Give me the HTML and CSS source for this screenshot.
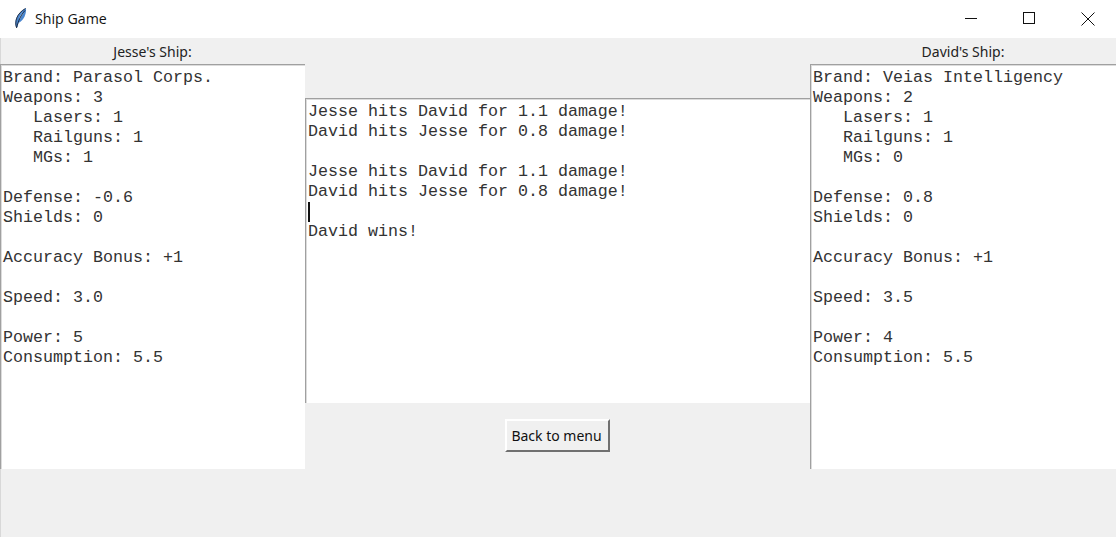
FILE: index.html
```html
<!DOCTYPE html>
<html lang="en">
<head>
    <meta charset="UTF-8">
    <title>Ship Game</title>
    <link rel="stylesheet" href="styles.css">
</head>
<body>
    <div id="titlebar">
        <svg class="app-icon" width="16" height="24" viewBox="0 0 16 24">
            <path d="M5 20 C3 15 5 6 15 1 C15.5 7 13 13 7.5 16 L6.5 20 Z" fill="#4a86cf"/>
            <path d="M12 6 C10 8 9 10 8.5 12" fill="none" stroke="#a9cdf0" stroke-width="1.4"/>
            <path d="M5.5 20.5 C3.5 15 5.5 6.5 14.5 1.5" fill="none" stroke="#2b3546" stroke-width="1"/>
            <path d="M14 3.5 C10 8 7.5 13 5.5 21" fill="none" stroke="#1c2c44" stroke-width="1"/>
        </svg>
        <span class="app-title">Ship Game</span>
        <div class="win-controls">
            <svg class="win-btn" width="12" height="12" viewBox="0 0 12 12"><path d="M0 6.5H12" stroke="#111" fill="none"/></svg>
            <svg class="win-btn" width="12" height="12" viewBox="0 0 12 12"><rect x="0.5" y="0.5" width="11" height="11" stroke="#111" fill="none"/></svg>
            <svg class="win-btn" width="14" height="14" viewBox="0 0 14 14"><path d="M1.5 0.5L14.5 13.5M14.5 0.5L1.5 13.5" stroke="#111" fill="none"/></svg>
        </div>
    </div>

    <div id="game">
        <div class="ship-col">
            <div class="ship-label">Jesse's Ship:</div>
            <pre class="text-box ship-stats">Brand: Parasol Corps.
Weapons: 3
   Lasers: 1
   Railguns: 1
   MGs: 1

Defense: -0.6
Shields: 0

Accuracy Bonus: +1

Speed: 3.0

Power: 5
Consumption: 5.5</pre>
        </div>

        <div class="battle-col">
            <pre class="text-box battle-log">Jesse hits David for 1.1 damage!
David hits Jesse for 0.8 damage!

Jesse hits David for 1.1 damage!
David hits Jesse for 0.8 damage!
<span class="caret"></span>
David wins!</pre>
            <div class="battle-actions">
                <button class="menu-btn" type="button">Back to menu</button>
            </div>
        </div>

        <div class="ship-col">
            <div class="ship-label">David's Ship:</div>
            <pre class="text-box ship-stats">Brand: Veias Intelligency
Weapons: 2
   Lasers: 1
   Railguns: 1
   MGs: 0

Defense: 0.8
Shields: 0

Accuracy Bonus: +1

Speed: 3.5

Power: 4
Consumption: 5.5</pre>
        </div>
    </div>
</body>
</html>
```

FILE: styles.css
```css
html, body {
    margin: 0;
    height: 100%;
    overflow: hidden;
}
body {
    background: #f0f0f0;
    box-shadow: inset 1px 0 0 #d8d8d8;
}
#titlebar {
    height: 38px;
    background: #fff;
    display: flex;
    align-items: center;
    padding-left: 11px;
    box-sizing: border-box;
}
.app-icon {
    margin-right: 8px;
}
.app-title {
    font-family: "Open Sans", sans-serif;
    font-size: 14.2px;
    color: #111;
    margin-bottom: 2px;
}
.win-controls {
    margin-left: auto;
    display: flex;
}
.win-btn {
    width: 58px;
    flex: none;
}
#game {
    display: grid;
    grid-template-columns: 305px 505px 306px;
}
.ship-col {
    display: flex;
    flex-direction: column;
}
.ship-label {
    height: 26px;
    line-height: 27px;
    text-align: center;
    font-family: "Noto Sans", sans-serif;
    font-size: 14px;
    color: #222;
}
.text-box {
    margin: 0;
    background: #fff;
    border-top: 1px solid #a0a0a0;
    border-left: 1px solid #a0a0a0;
    box-shadow: inset 1px 1px 0 #dcdcdc;
    box-sizing: border-box;
    font-family: "Liberation Mono", monospace;
    font-size: 16.67px;
    line-height: 20px;
    color: #333;
    padding: 3px 0 0 2px;
}
.ship-stats {
    height: 405px;
}
.battle-col {
    padding-top: 60px;
}
.battle-log {
    height: 305px;
}
.caret {
    display: inline-block;
    width: 1.5px;
    height: 20px;
    background: #111;
    vertical-align: top;
}
.battle-actions {
    display: flex;
    justify-content: center;
    padding-top: 16px;
}
.menu-btn {
    width: 105px;
    height: 33px;
    padding: 0 2px 0 0;
    background: #f0f0f0;
    border: 2px solid;
    border-color: #fff #707070 #707070 #fff;
    font-family: "Noto Sans", sans-serif;
    font-size: 14px;
    color: #111;
}
```
